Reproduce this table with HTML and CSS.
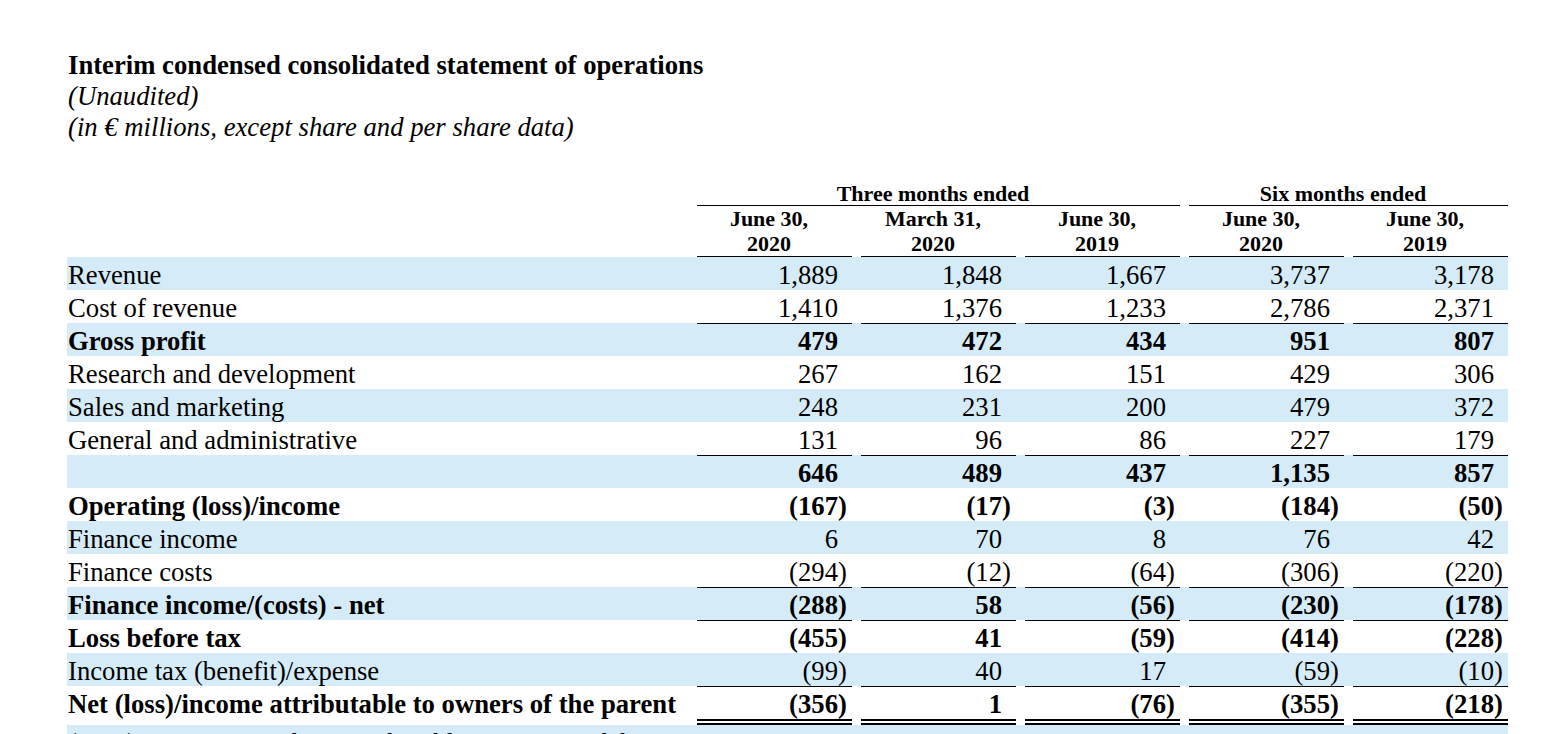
FILE: index.html
```html
<!DOCTYPE html>
<html lang="en">
<head>
<meta charset="utf-8">
<title>Interim condensed consolidated statement of operations</title>
<link rel="stylesheet" href="styles.css">
</head>
<body>
<main class="statement">
  <header class="heading">
    <h1 class="title">Interim condensed consolidated statement of operations</h1>
    <p class="note">(Unaudited)</p>
    <p class="note">(in € millions, except share and per share data)</p>
  </header>

  <div class="table">
    <div class="row group">
      <div class="label"></div>
      <div class="ghead three">Three months ended</div>
      <div class="ghead six">Six months ended</div>
    </div>
    <div class="row colhead">
      <div class="label"></div>
      <div class="chead">June 30,<br>2020</div>
      <div class="chead">March 31,<br>2020</div>
      <div class="chead">June 30,<br>2019</div>
      <div class="chead">June 30,<br>2020</div>
      <div class="chead">June 30,<br>2019</div>
    </div>

    <div class="lines">
      <div class="row line">
        <div class="label">Revenue</div>
        <div class="num">1,889</div><div class="num">1,848</div><div class="num">1,667</div><div class="num">3,737</div><div class="num">3,178</div>
      </div>
      <div class="row line ul">
        <div class="label">Cost of revenue</div>
        <div class="num">1,410</div><div class="num">1,376</div><div class="num">1,233</div><div class="num">2,786</div><div class="num">2,371</div>
      </div>
      <div class="row line strong">
        <div class="label">Gross profit</div>
        <div class="num">479</div><div class="num">472</div><div class="num">434</div><div class="num">951</div><div class="num">807</div>
      </div>
      <div class="row line">
        <div class="label">Research and development</div>
        <div class="num">267</div><div class="num">162</div><div class="num">151</div><div class="num">429</div><div class="num">306</div>
      </div>
      <div class="row line">
        <div class="label">Sales and marketing</div>
        <div class="num">248</div><div class="num">231</div><div class="num">200</div><div class="num">479</div><div class="num">372</div>
      </div>
      <div class="row line ul">
        <div class="label">General and administrative</div>
        <div class="num">131</div><div class="num">96</div><div class="num">86</div><div class="num">227</div><div class="num">179</div>
      </div>
      <div class="row line strong">
        <div class="label"></div>
        <div class="num">646</div><div class="num">489</div><div class="num">437</div><div class="num">1,135</div><div class="num">857</div>
      </div>
      <div class="row line strong">
        <div class="label">Operating (loss)/income</div>
        <div class="num">(167<span class="cp">)</span></div><div class="num">(17<span class="cp">)</span></div><div class="num">(3<span class="cp">)</span></div><div class="num">(184<span class="cp">)</span></div><div class="num">(50<span class="cp">)</span></div>
      </div>
      <div class="row line">
        <div class="label">Finance income</div>
        <div class="num">6</div><div class="num">70</div><div class="num">8</div><div class="num">76</div><div class="num">42</div>
      </div>
      <div class="row line ul">
        <div class="label">Finance costs</div>
        <div class="num">(294<span class="cp">)</span></div><div class="num">(12<span class="cp">)</span></div><div class="num">(64<span class="cp">)</span></div><div class="num">(306<span class="cp">)</span></div><div class="num">(220<span class="cp">)</span></div>
      </div>
      <div class="row line ul strong">
        <div class="label">Finance income/(costs) - net</div>
        <div class="num">(288<span class="cp">)</span></div><div class="num">58</div><div class="num">(56<span class="cp">)</span></div><div class="num">(230<span class="cp">)</span></div><div class="num">(178<span class="cp">)</span></div>
      </div>
      <div class="row line strong">
        <div class="label">Loss before tax</div>
        <div class="num">(455<span class="cp">)</span></div><div class="num">41</div><div class="num">(59<span class="cp">)</span></div><div class="num">(414<span class="cp">)</span></div><div class="num">(228<span class="cp">)</span></div>
      </div>
      <div class="row line ul">
        <div class="label">Income tax (benefit)/expense</div>
        <div class="num">(99<span class="cp">)</span></div><div class="num">40</div><div class="num">17</div><div class="num">(59<span class="cp">)</span></div><div class="num">(10<span class="cp">)</span></div>
      </div>
      <div class="row line dbl strong">
        <div class="label">Net (loss)/income attributable to owners of the parent</div>
        <div class="num">(356<span class="cp">)</span></div><div class="num">1</div><div class="num">(76<span class="cp">)</span></div><div class="num">(355<span class="cp">)</span></div><div class="num">(218<span class="cp">)</span></div>
      </div>
      <div class="row line">
        <div class="label">(Loss)/earnings per share attributable to owners of the parent</div>
        <div class="num"></div><div class="num"></div><div class="num"></div><div class="num"></div><div class="num"></div>
      </div>
    </div>
  </div>
</main>
</body>
</html>
```

FILE: styles.css
```css
* {
  box-sizing: border-box;
}

body {
  margin: 0;
  background: #ffffff;
  color: #000000;
  font-family: "Liberation Serif", "Times New Roman", serif;
}

.statement {
  padding: 50px 0 0 67px;
}

.heading {
  padding-left: 1px;
}

.title {
  margin: 0;
  font-size: 26.7px;
  font-weight: bold;
  line-height: 31px;
}

.note {
  margin: 0;
  font-size: 26.7px;
  font-style: italic;
  line-height: 31px;
}

.table {
  width: 1441px;
  margin-top: 39px;
}

.row {
  display: grid;
  grid-template-columns: 621px repeat(5, 155px);
  column-gap: 9px;
}

.group {
  height: 24px;
}

.ghead {
  font-size: 22px;
  font-weight: bold;
  line-height: 23px;
  text-align: center;
  padding-right: 11px;
  border-bottom: 1px solid #000000;
}

.three {
  grid-column: 2 / 5;
}

.six {
  grid-column: 5 / 7;
}

.colhead {
  height: 51px;
}

.chead {
  font-size: 22px;
  font-weight: bold;
  line-height: 25px;
  text-align: center;
  padding-right: 11px;
  border-bottom: 1px solid #000000;
}

.line {
  height: 33px;
}

.line:nth-child(odd) {
  background: #d5ecf8;
}

.label {
  padding: 4px 0 0 1px;
  font-size: 26.7px;
  line-height: 29px;
  white-space: nowrap;
}

.num {
  padding: 4px 14px 0 0;
  font-size: 26.7px;
  line-height: 29px;
  text-align: right;
  white-space: nowrap;
}

.cp {
  margin-right: -0.333em;
}

.strong {
  font-weight: bold;
}

.ul .num {
  border-bottom: 1px solid #000000;
}

.dbl {
  height: 39px;
}

.dbl .num {
  border-bottom: 6px double #000000;
}
```
